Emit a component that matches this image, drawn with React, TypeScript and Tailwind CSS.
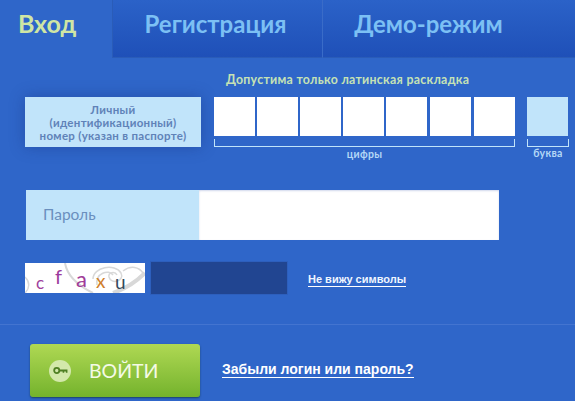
import React from "react";

const font = { fontFamily: '"Lato", "Open Sans", sans-serif' };

function Captcha() {
  return (
    <svg width="120" height="30" viewBox="0 0 120 30" className="block shrink-0 bg-white">
      <g fill="none" stroke="#d8d8d8" strokeWidth="1.5">
        <path d="M40 0 C42 12 52 22 68 30" strokeWidth="2" />
        <path d="M120 10 C110 20 100 26 88 30" strokeWidth="4" />
        <path d="M68 16 C68 4 90 0 96 10 C100 18 86 22 84 14 C83 9 90 8 92 12" />
        <path d="M72 22 C70 10 84 6 88 12" />
        <path d="M98 8 C106 2 114 4 118 10" />
        <path d="M0 14 C5 19 5 25 0 30" />
      </g>
      <g fontFamily='"Lato", sans-serif'>
        <text x="11" y="26" fontSize="17" fill="#a0409c">c</text>
        <text x="30" y="21" fontSize="20" fill="#9c3a9c">f</text>
        <text x="51" y="24" fontSize="22" fill="#a03c98">a</text>
        <text x="71" y="25" fontSize="19" fill="#d0802c">x</text>
        <text x="90" y="26" fontSize="19" fill="#34485c">u</text>
      </g>
    </svg>
  );
}

function Tab({ label, className }: { label: string; className: string }) {
  return (
    <div
      className={`h-[58px] flex items-center justify-center border-b border-[#2a5cb8] bg-gradient-to-b from-[#2b62c8] to-[#1f50b8] text-[24px] font-bold text-[#7cc0f4] pb-[10px] ${className}`}
    >
      {label}
    </div>
  );
}

export default function App() {
  const digitGaps = ["mr-[2px]", "mr-[2px]", "mr-[2px]", "mr-[2px]", "mr-[3px]", "mr-[3px]", ""];
  return (
    <div style={font} className="w-[575px] h-[401px] overflow-hidden bg-[#2f66c9] flex flex-col">
      <div className="flex shrink-0">
        <div className="w-[112px] h-[58px] flex items-center pl-[18px] pb-[10px] text-[25px] font-bold text-[#cfe6a4] bg-[#2f66c9]">
          Вход
        </div>
        <Tab label="Регистрация" className="w-[211px] pr-[4px] border-l border-l-[#2a5cb8] border-r border-r-[#3a6cc8]" />
        <Tab label="Демо-режим" className="flex-1 pr-[41px]" />
      </div>

      <div className="mt-[14px] h-[25px] shrink-0 pl-[226px] text-[12.3px] font-bold tracking-[0.3px] text-[#c6e2b4] leading-[16px]">
        Допустима только латинская раскладка
      </div>

      <div className="flex items-start pl-[25px] shrink-0">
        <div className="w-[176px] h-[50px] bg-[#c1e4fa] shadow-[0_0_14px_rgba(20,40,110,0.35)] flex items-center justify-center text-center text-[11.5px] font-bold tracking-[0.3px] leading-[13px] text-[#5f82b8] mr-[13px] pt-[1px]">
          <div>
            Личный
            <br />
            (идентификационный)
            <br />
            номер (указан в паспорте)
          </div>
        </div>
        <div className="flex flex-col w-[301px] mr-[12px]">
          <div className="flex">
            {digitGaps.map((g, i) => (
              <div key={i} className={`w-[41px] h-[39px] bg-white ${g}`} />
            ))}
          </div>
          <div className="mt-[3px] h-[8px] border border-t-0 border-[#c1e4fa]" />
          <div className="text-center text-[10.5px] font-bold tracking-[0.3px] leading-[12px] mt-[1px] text-[#b4d8f6]">цифры</div>
        </div>
        <div className="flex flex-col w-[42px]">
          <div className="w-[41px] h-[39px] bg-[#c1e4fa]" />
          <div className="mt-[3px] h-[8px] border border-t-0 border-[#c1e4fa]" />
          <div className="text-center text-[10.5px] font-bold tracking-[0.3px] leading-[12px] text-[#b4d8f6]">буква</div>
        </div>
      </div>

      <div className="mt-[30px] ml-[26px] w-[473px] h-[50px] shrink-0 flex bg-[#c1e4fa]">
        <div className="w-[173px] flex items-center pl-[17px] text-[15.5px] text-[#6a8fbe]">Пароль</div>
        <div className="flex-1 bg-white shadow-[inset_0_1px_2px_rgba(120,140,200,0.35)]" />
      </div>

      <div className="mt-[21px] ml-[25px] h-[34px] shrink-0 flex items-center">
        <Captcha />
        <div className="ml-[5px] w-[138px] h-[34px] bg-[#214591] border border-[#2d5fbd]" />
        <a
          className="ml-[20px] mt-[2px] text-[11px] font-bold leading-[14px] text-[#eef5ff] border-b border-white"
          style={{ fontFamily: '"Liberation Sans", Arial, sans-serif' }}
        >
          Не вижу символы
        </a>
      </div>

      <div className="mt-[29px] shrink-0 border-t border-[#4374d0]" />

      <div className="mt-[19px] ml-[30px] flex items-center shrink-0">
        <div className="w-[170px] h-[53px] rounded-[3px] bg-gradient-to-b from-[#afd853] to-[#74b32c] shadow-[0_1px_2px_rgba(20,50,60,0.7)] flex items-center pl-[19px]">
          <div className="w-[22px] h-[22px] rounded-full bg-[#d3e8ab] flex items-center justify-center">
            <svg width="15" height="9" viewBox="0 0 14 8" fill="none">
              <circle cx="3.5" cy="4" r="2.4" stroke="#4f7f24" strokeWidth="1.7" />
              <path d="M6 3.1H13.5V6.2H12V4.9H10.5V6.2H9V4.9H6Z" fill="#4f7f24" />
            </svg>
          </div>
          <span className="ml-[18px] text-[19.5px] font-normal text-[#f4fae6]">ВОЙТИ</span>
        </div>
        <a
          className="ml-[22px] mb-[2px] text-[14px] font-bold leading-[15px] text-white border-b border-white"
          style={{ fontFamily: '"Liberation Sans", Arial, sans-serif' }}
        >
          Забыли логин или пароль?
        </a>
      </div>
    </div>
  );
}
